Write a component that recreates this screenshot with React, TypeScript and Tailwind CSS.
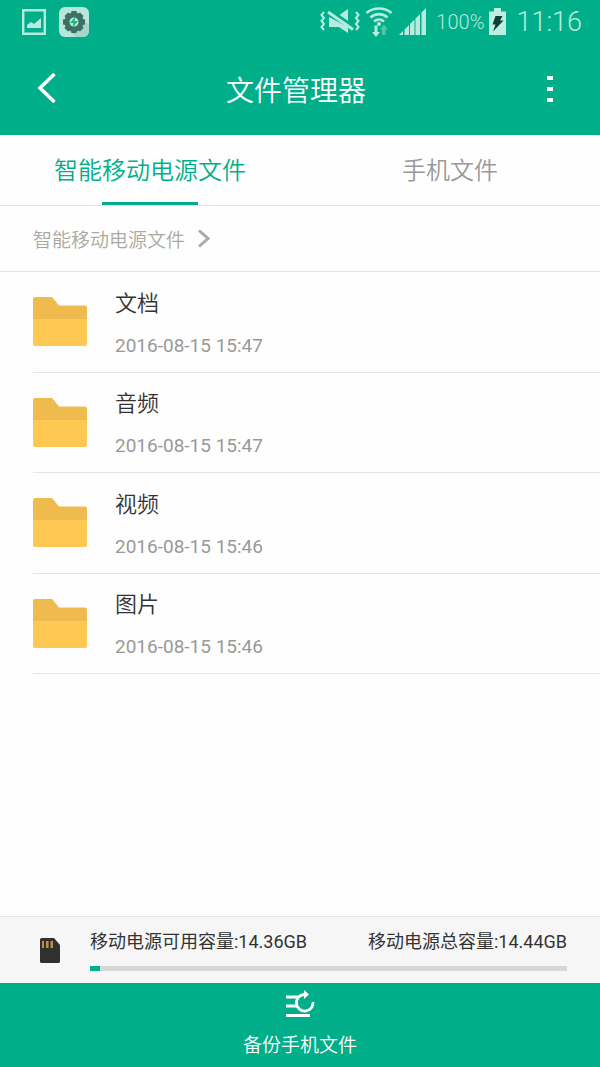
import { useState } from 'react';

const TABS = ['智能移动电源文件', '手机文件'];

const FOLDERS = [
  { name: '文档', date: '2016-08-15 15:47' },
  { name: '音频', date: '2016-08-15 15:47' },
  { name: '视频', date: '2016-08-15 15:46' },
  { name: '图片', date: '2016-08-15 15:46' },
];

const storage = { free: 14.36, total: 14.44, percent: 2 };

const StatusBar = () => (
  <div className="flex h-[43px] items-center pl-[22px] pr-[18px] font-light text-[#b8ebdf]">
    <svg width="24" height="26" viewBox="0 0 24 26" aria-hidden="true">
      <path d="M1.2 1.2h21.6v23.6H1.2z" fill="none" stroke="currentColor" strokeWidth="2.4" />
      <path d="M5 19v-3l4-3 3 2 7-6v10z" fill="currentColor" />
    </svg>

    <svg className="ml-[13px]" width="30" height="30" viewBox="0 0 30 30" aria-hidden="true">
      <rect width="30" height="30" rx="6" fill="#b8e6da" />
      <path d="M22 22l4-8 4 4v6a6 6 0 0 1-6 6h-7l-7-6z" fill="#a6d5c9" />
      <g fill="#3e6f66">
        <circle cx="15" cy="15" r="9.500" />
        <path d="M12.500 4h5l1 4h-7zM12.500 26h5l1-4h-7zM4 12.500v5l4 1v-7zM26 12.500v5l-4 1v-7z" />
        <path d="M12.500 4h5l1 4h-7zM12.500 26h5l1-4h-7zM4 12.500v5l4 1v-7zM26 12.500v5l-4 1v-7z" transform="rotate(45 15 15)" />
      </g>
      <circle cx="15" cy="15" r="4.500" fill="#b8e6da" />
      <path d="M16.500 9.500L11 16h3.500l-1 4.500L19 14h-3.500z" fill="#1fb573" />
    </svg>

    <svg className="ml-auto" width="40" height="28" viewBox="0 0 40 28" fill="none" stroke="currentColor" aria-hidden="true">
      <path d="M4 4l-2.500 3L4 10l-2.500 3L4 16l-2.500 3L4 22M36 4l2.500 3L36 10l2.500 3L36 16l2.500 3L36 22" strokeWidth="2" />
      <path d="M9 9v10h10l9 6v-6z" fill="currentColor" stroke="none" />
      <path d="M18 8l10-7v15z" fill="currentColor" stroke="none" />
      <path d="M9 2l24 17" stroke="#00af8a" strokeWidth="4" />
      <path d="M8 4l25 17.500" strokeWidth="3" />
    </svg>

    <svg className="ml-[5px]" width="28" height="30" viewBox="0 0 28 30" fill="none" aria-hidden="true">
      <path d="M1.500 6c7-6 18-6 25 0M5.500 10.500c5-4.500 12-4.500 17 0M9 14.500c3-2.500 7-2.500 10 0" stroke="currentColor" strokeWidth="2.700" />
      <circle cx="14" cy="17" r="2" fill="currentColor" />
      <path d="M9.500 18.500h3V25H15l-4 5-4-5h2.500z" fill="currentColor" />
      <path d="M17 28h3.500v-5.500H23l-4-5-4 5h2z" fill="#4fc8ab" />
    </svg>

    <svg className="ml-[6px]" width="27" height="28" viewBox="0 0 27 28" fill="currentColor" aria-hidden="true">
      <path d="M0 27l4-4v4zM5.500 21.500l4.500-4.500v10H5.500zM11 16l4.500-4.500V27H11zM16.500 10.500L21 6v21h-4.500zM22.500 4.500L27 0v27h-4.500z" />
    </svg>

    <span className="ml-[10px] text-[20px] leading-none">100%</span>

    <svg className="ml-[5px]" width="17" height="27" viewBox="0 0 17 27" aria-hidden="true">
      <path d="M5 0h7v3.500h5V27H0V3.500h5z" fill="#bdeee2" />
      <path d="M6.500 8h7L11 12.500h3.500L4 23.500l2.500-7H3.500z" fill="#0b4036" />
    </svg>

    <span className="ml-[10px] pt-0.5 text-[27px] leading-none">11:16</span>
  </div>
);

const FolderIcon = () => (
  <svg width="54" height="49" viewBox="0 0 54 49" aria-hidden="true">
    <path d="M0 2a2 2 0 0 1 2-2h17l7 8.500h26a2 2 0 0 1 2 2V24H0z" fill="#efbb4e" />
    <path d="M0 22h54v25a2 2 0 0 1-2 2H2a2 2 0 0 1-2-2z" fill="#ffc853" />
  </svg>
);

const App = () => {
  const [activeTab, setActiveTab] = useState(0);

  return (
    <div className="flex min-h-screen flex-col bg-[#fefefe] font-[Roboto,'Noto_Sans_CJK_SC',sans-serif] text-[#333333]">
      <header className="bg-[#00af8a] text-white">
        <StatusBar />
        <div className="flex h-[92px] items-center justify-between pl-[34px] pr-[42px]">
          <button type="button" aria-label="返回" className="flex w-6 justify-start pl-[3px]">
            <svg width="19" height="32" viewBox="0 0 19 32" fill="none" stroke="currentColor" strokeWidth="3.500">
              <path d="M17.500 1L3 15l14.500 14" />
            </svg>
          </button>
          <h1 className="pt-1.5 text-[28px] font-[350] leading-8">文件管理器</h1>
          <button type="button" aria-label="更多" className="flex w-6 justify-end pr-[5px]">
            <svg width="6" height="28" viewBox="0 0 6 28" fill="currentColor">
              <path d="M0 1h6v4H0zM0 12h6v4H0zM0 23h6v4H0z" />
            </svg>
          </button>
        </div>
      </header>

      {/* Tabs */}
      <div role="tablist" className="grid h-[71px] grid-cols-2 border-b border-[#e6e6e6]">
        {TABS.map((tab, i) => (
          <button
            key={tab}
            type="button"
            role="tab"
            aria-selected={activeTab === i}
            onClick={() => setActiveTab(i)}
            className={`relative pt-0.5 text-[24px] font-[350] leading-8 ${activeTab === i ? 'text-[#00af8a]' : 'text-[#999999]'}`}
          >
            {tab}
            {activeTab === i && <span className="absolute inset-x-0 bottom-0 mx-auto h-[3px] w-24 bg-[#00af8a]" />}
          </button>
        ))}
      </div>

      {/* Breadcrumb */}
      <nav className="flex h-[66px] items-center gap-3 border-b border-[#e6e6e6] pl-[33px]">
        <a href="#" className="pt-1 text-[19px] font-[350] leading-6 text-[#aaa9a1]">{TABS[activeTab]}</a>
        <svg width="14" height="20" viewBox="0 0 14 20" fill="none" stroke="#aaaaaa" strokeWidth="3" aria-hidden="true">
          <path d="M2 1.500l9 8-9 8" />
        </svg>
      </nav>

      <main className="flex-1">
        <ul className="ml-[33px] grid h-[402px] auto-rows-fr">
          {FOLDERS.map((folder) => (
            <li key={folder.name} className="flex items-center gap-7 border-b border-[#e6e6e6]">
              <FolderIcon />
              <div className="flex flex-col gap-3.5 pt-0.5">
                <p className="text-[22px] font-[350] leading-8">{folder.name}</p>
                <p className="text-[19px] leading-6 text-[#999999]">{folder.date}</p>
              </div>
            </li>
          ))}
        </ul>
      </main>

      {/* Storage */}
      <section className="flex h-[67px] items-center border-t border-[#e6e6e6] bg-[#f6f6f6] pl-10 pr-[33px]">
        <svg width="20" height="25" viewBox="0 0 20 25" aria-hidden="true">
          <path d="M1.500 0H14l6 7v16.500a1.500 1.500 0 0 1-1.500 1.500h-17A1.500 1.500 0 0 1 0 23.500v-22A1.500 1.500 0 0 1 1.500 0z" fill="#303030" />
          <path d="M2 3h2v7H2zM6 3h2.500v7H6zM10.500 3H13v7h-2.500z" fill="#bd9137" />
        </svg>
        <div className="ml-[30px] flex-1">
          <div className="flex justify-between text-[18px] leading-6">
            <span>移动电源可用容量:{storage.free}GB</span>
            <span>移动电源总容量:{storage.total}GB</span>
          </div>
          <div
            role="progressbar"
            aria-label="已用容量"
            aria-valuenow={storage.percent}
            className="mt-3 h-[5px] bg-[#d7d7d7]"
          >
            <div className="h-full bg-[#00af8a]" style={{ width: `${storage.percent}%` }} />
          </div>
        </div>
      </section>

      <button
        type="button"
        className="flex h-[84px] w-full flex-col items-center justify-start gap-4 bg-[#00af8a] pt-[7px] text-[19px] font-[350] leading-6 text-white"
      >
        <svg width="30" height="28" viewBox="0 0 30 28" fill="none" stroke="currentColor" strokeWidth="3" aria-hidden="true">
          <path d="M1 7h12M1 16h12M1 25.500h24" />
          <path d="M20 4.500h-1A8.300 8.300 0 1 0 28 12" strokeWidth="2.800" />
          <path d="M19 0l5 4.500-5 4.500z" fill="currentColor" stroke="none" />
        </svg>
        备份手机文件
      </button>
    </div>
  );
};

export default App;
